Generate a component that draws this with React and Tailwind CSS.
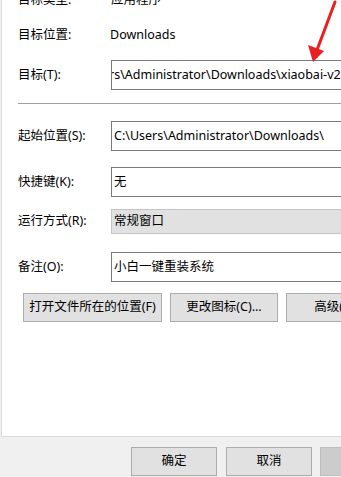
import React from 'react';

const font = { fontFamily: '"Noto Sans", "Noto Sans CJK SC", sans-serif' };

const Row = ({ label, children, className = '' }) => (
  <div className={`flex items-center ${className}`}>
    <div className="w-[93px] shrink-0 text-[12.5px] text-black">{label}</div>
    {children}
  </div>
);

const TextBox = ({ children, gray = false, h = 'h-[30px]' }) => (
  <div
    className={`${h} flex-1 flex items-center overflow-hidden border px-[2px] text-[12.5px] text-black whitespace-nowrap ${
      gray ? 'bg-[#e1e1e1] border-[#c4c4c4]' : 'bg-white border-[#7a7a7a]'
    }`}
  >
    {children}
  </div>
);

const Btn = ({ children, className = '' }) => (
  <div
    className={`h-[29px] shrink-0 flex items-center justify-center border border-[#adadad] bg-[#e1e1e1] text-[12.5px] text-black whitespace-nowrap ${className}`}
  >
    {children}
  </div>
);

export default function App() {
  return (
    <div className="relative w-[341px] h-[477px] overflow-hidden bg-[#f0f0f0]" style={font}>
      {/* property page */}
      <div className="ml-[1px] w-[420px] h-[437px] bg-white border-l border-b border-[#d9d9d9] overflow-hidden">
        <div className="pl-[16px] flex flex-col">
          <Row label="目标类型:" className="h-[20px] -mt-[10px]">
            <div className="text-[12.5px]">应用程序</div>
          </Row>
          <Row label="目标位置:" className="h-[20px] mt-[15px]">
            <div className="text-[12.5px] -ml-[1px]">Downloads</div>
          </Row>
          <Row label="目标(T):" className="mt-[15px]">
            <TextBox>
              <span className="-ml-[5px]">rs\Administrator\Downloads\xiaobai-v2.0.exe</span>
            </TextBox>
          </Row>
          <div className="mt-[13px] h-px bg-[#a0a0a0]" />
          <Row label="起始位置(S):" className="mt-[17px]">
            <TextBox>C:\Users\Administrator\Downloads\</TextBox>
          </Row>
          <Row label="快捷键(K):" className="mt-[16px]">
            <TextBox>无</TextBox>
          </Row>
          <Row label="运行方式(R):" className="mt-[12px]">
            <TextBox gray h="h-[25px]">常规窗口</TextBox>
          </Row>
          <Row label="备注(O):" className="mt-[18px]">
            <TextBox>小白一键重装系统</TextBox>
          </Row>
          <div className="mt-[11px] flex">
            <Btn className="ml-[5px] w-[139px]">打开文件所在的位置(F)</Btn>
            <Btn className="ml-[8px] w-[108px]">更改图标(C)...</Btn>
            <Btn className="ml-[8px] w-[108px]">高级(D)...</Btn>
          </div>
        </div>
      </div>

      {/* dialog buttons */}
      <div className="flex mt-[10px]">
        <Btn className="ml-[131px] w-[86px]">确定</Btn>
        <Btn className="ml-[9px] w-[86px]">取消</Btn>
        <div className="ml-[8px] w-[80px] h-[29px] shrink-0 bg-[#cccccc] border border-[#bfbfbf]" />
      </div>

      {/* red annotation arrow */}
      <svg className="absolute left-0 top-0 pointer-events-none" width="341" height="477">
        <line x1="335" y1="2" x2="317" y2="50" stroke="#e8201e" strokeWidth="3" strokeLinecap="round" />
        <polygon points="313,62 308,45 324,51" fill="#e8201e" />
      </svg>
    </div>
  );
}
